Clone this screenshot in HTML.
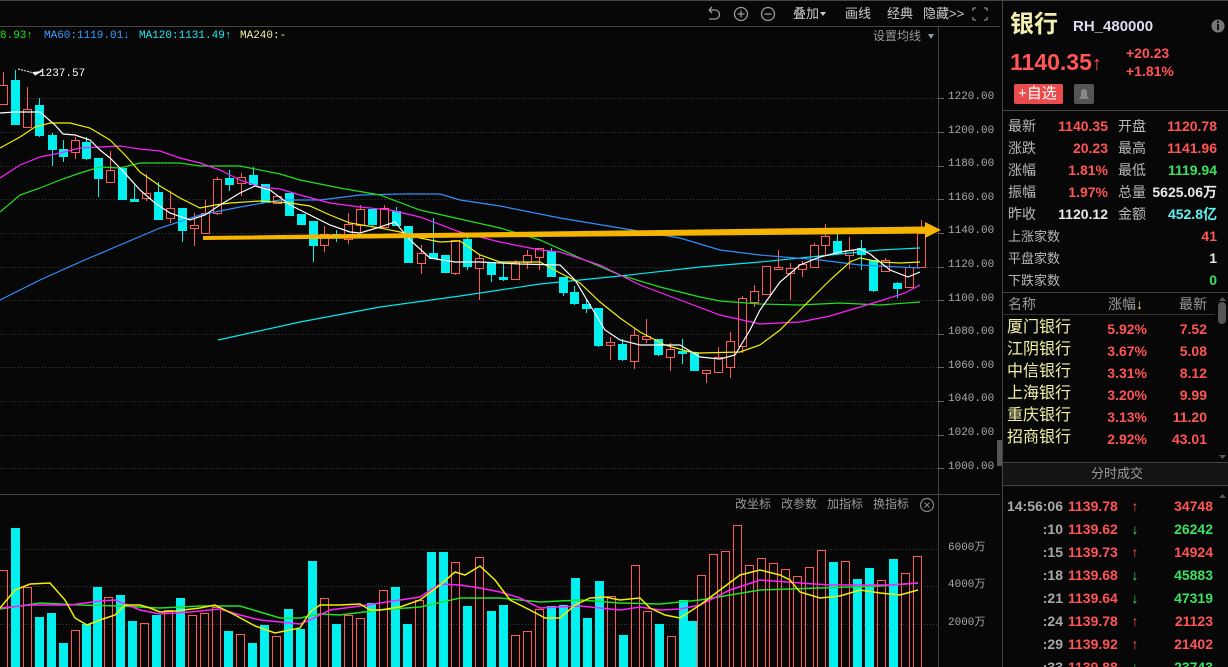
<!DOCTYPE html>
<html style="width:1228px;height:667px;overflow:hidden"><head><meta charset="utf-8">
<style>
*{margin:0;padding:0;box-sizing:border-box}
body{width:1228px;height:667px;background:#070707;overflow:hidden;position:relative;font-family:"Liberation Sans","Noto Sans CJK SC",sans-serif;color:#ccc}
.a{position:absolute;white-space:nowrap;line-height:1}
.m{font-family:"Liberation Mono","Noto Sans CJK SC",monospace}
.r{color:#ff5555}.g{color:#3ee060}.w{color:#e8e8e8}.gr{color:#a8a8a8}
.lbl{font-size:14px;color:#b8b8b8}
.val{font-size:14px;font-weight:bold;text-align:right}
.nm{font-size:16px;color:#f2f0a8}
</style></head><body>
<svg id="ch" width="1228" height="667" style="position:absolute;left:0;top:0">
<g stroke="#3a3a3a" stroke-width="1" stroke-dasharray="1,2" id="grid"></g>
<line x1="0" y1="0.5" x2="1228" y2="0.5" stroke="#444"/>
<line x1="0" y1="26.5" x2="1000" y2="26.5" stroke="#444"/>
<line x1="938.5" y1="27" x2="938.5" y2="667" stroke="#444"/>
<line x1="0" y1="494.5" x2="1000" y2="494.5" stroke="#444"/>
<line x1="1002.5" y1="0" x2="1002.5" y2="667" stroke="#444"/>
<rect x="997" y="440" width="5" height="26" fill="#555"/>
<g id="cd"></g><g id="ln" fill="none" stroke-width="1.2"></g>
<g id="vl"></g><g id="vln" fill="none" stroke-width="1.5"></g>
<g id="tk" stroke="#666"></g>
<polygon points="203,236 925,226.5 925,222 941,230 925,238 925,233.5 203,240" fill="#f5b400"/>
<polyline points="42,71 35,75 33,72" fill="#fff" stroke="#fff"/>
<polyline points="18,69 30,72 37,74" fill="none" stroke="#fff" stroke-dasharray="2,1"/>
<circle cx="741" cy="14" r="6.5" fill="none" stroke="#999" stroke-width="1.3"/><path d="M737.5 14h7M741 10.5v7" stroke="#999" stroke-width="1.3"/>
<circle cx="768" cy="14" r="6.5" fill="none" stroke="#999" stroke-width="1.3"/><path d="M764.5 14h7" stroke="#999" stroke-width="1.3"/>
<path d="M709 10h6a4.5 4.5 0 0 1 0 9h-6M709 10l3-3M709 10l3 3" fill="none" stroke="#999" stroke-width="1.3"/>
<path d="M820 12l6 0-3 4z" fill="#ccc"/>
<path d="M973 8h3M973 8v3M987 8h-3M987 8v3M973 20h3M973 20v-3M987 20h-3M987 20v-3" stroke="#888" stroke-width="1.3"/>
<path d="M928 34l6 0-3 5z" fill="#8899bb"/>
<circle cx="927" cy="505" r="6.5" fill="none" stroke="#888" stroke-width="1.2"/><path d="M924.5 502.5l5 5M929.5 502.5l-5 5" stroke="#888"/>
<circle cx="1218" cy="26" r="6.5" fill="#777"/><rect x="1217" y="24" width="2" height="6" fill="#111"/><rect x="1217" y="21" width="2" height="2" fill="#111"/>
<rect x="1014" y="84" width="49" height="20" rx="2" fill="#e84c4c"/>
<rect x="1074" y="84" width="20" height="20" rx="2" fill="#555"/><path d="M1079 99h10l-2-3v-4a3 3 0 0 0-6 0v4z" fill="#888"/>
<line x1="1003" y1="110.5" x2="1228" y2="110.5" stroke="#444"/>
<line x1="1003" y1="292.5" x2="1228" y2="292.5" stroke="#444"/>
<line x1="1003" y1="314.5" x2="1215" y2="314.5" stroke="#333"/>
<rect x="1003" y="462" width="225" height="24" fill="#141414"/>
<line x1="1003" y1="462.5" x2="1228" y2="462.5" stroke="#444"/>
<line x1="1003" y1="485.5" x2="1228" y2="485.5" stroke="#444"/>
<rect x="1218" y="302" width="8" height="22" rx="4" fill="#555"/>
<path d="M1219 301l3.5-4 3.5 4zM1219 455l3.5 4 3.5-4zM1219 498l3.5-4 3.5 4z" fill="#555"/>
</svg>
<script>
var S='http://www.w3.org/2000/svg';
function el(p,t,a){var e=document.createElementNS(S,t);for(var k in a)e.setAttribute(k,a[k]);document.getElementById(p).appendChild(e);return e}
var gy=[98,132,166,199,233,267,300,334,367,401,435,468];
gy.forEach(function(y){el('grid','line',{x1:0,y1:y+.5,x2:938,y2:y+.5})});
[549,586,624].forEach(function(y){el('grid','line',{x1:0,y1:y+.5,x2:938,y2:y+.5})});
gy.forEach(function(y){el('tk','line',{x1:938,y1:y+.5,x2:944,y2:y+.5})});
var C=[[3,85,104,72,104,1],[15,80,124,70,124,0],[27,109,127,87,127,1],[39,105,135,98,137,0],[52,135,149,133,166,0],[63,149,156,140,162,0],[75,140,152,137,159,1],[86,142,158,137,160,0],[98,158,178,158,197,0],[110,170,182,151,182,1],[122,168,199,168,200,0],[134,199,201,185,201,0],[146,193,198,174,201,1],[158,192,219,182,220,0],[170,208,218,191,223,1],[182,208,230,208,242,0],[194,225,228,213,246,1],[205,213,233,200,233,1],[217,179,213,177,215,1],[229,178,184,170,191,0],[241,177,183,173,196,1],[253,175,184,167,184,0],[265,184,202,184,203,0],[277,196,203,195,203,1],[289,193,215,193,215,0],[301,214,224,214,224,0],[313,221,245,221,262,0],[324,234,245,226,252,1],[336,234,237,230,242,0],[348,224,239,213,244,1],[360,209,225,205,233,1],[372,209,224,209,226,0],[384,208,227,205,227,1],[396,211,225,207,225,0],[408,226,262,226,262,0],[421,253,263,245,274,1],[433,253,258,218,258,0],[445,255,272,255,272,0],[455,240,273,240,275,1],[467,239,266,237,270,0],[479,258,268,254,300,1],[491,262,274,262,282,0],[503,277,279,263,281,0],[515,262,279,260,279,1],[527,255,262,250,269,1],[539,248,257,248,270,1],[551,251,276,248,276,0],[563,277,292,277,296,0],[574,292,303,286,305,0],[586,304,308,299,313,0],[598,308,345,308,347,0],[610,342,345,337,360,1],[622,344,359,339,361,0],[634,335,361,328,369,1],[646,336,339,319,343,1],[658,339,354,339,356,0],[670,349,357,343,371,1],[682,351,353,339,364,0],[694,353,370,353,371,0],[706,370,373,370,383,1],[718,357,372,347,372,1],[730,341,367,332,378,1],[742,298,346,296,353,1],[754,291,302,285,307,1],[766,266,294,266,294,1],[778,267,269,250,269,1],[790,268,273,263,300,1],[802,264,269,261,277,1],[814,245,267,243,267,1],[825,236,245,224,255,1],[837,241,253,234,253,0],[849,250,255,237,269,1],[861,248,254,240,270,0],[873,260,290,260,292,0],[885,260,271,258,271,1],[897,283,288,282,298,0],[909,267,287,265,287,1],[921,233,267,220,267,1]];
C.forEach(function(c){var x=c[0],col=c[5]?'#ff5a5a':'#00f0f0';
el('cd','line',{x1:x+.5,y1:c[3],x2:x+.5,y2:c[4],stroke:col});
var h=Math.max(c[2]-c[1],1);
if(c[5])el('cd','rect',{x:x-3.5,y:c[1]+.5,width:8,height:h,fill:'#070707',stroke:col});
else el('cd','rect',{x:x-4,y:c[1],width:9,height:h+1,fill:col});});
function pl(g,col,pts){el(g,'polyline',{points:pts,stroke:col})}
pl('ln','#00e8f0','218,340 300,322 380,307 460,296 540,284 620,276 700,267 760,262 830,255 880,250 920,248');
pl('ln','#2f8fff','0,300 40,280 80,262 120,245 160,228 200,215 240,207 280,200 320,200 360,195 400,194 440,194 460,200 500,206 560,218 620,228 680,238 720,250 760,255 820,260 860,265 920,268');
pl('ln','#20e020','0,212 20,195 40,188 60,180 80,173 100,167 120,168 140,163 180,163 200,166 240,166 280,174 300,180 340,188 380,195 420,210 460,219 500,228 540,240 580,258 620,275 660,287 700,297 720,301 760,304 800,305 840,303 880,305 920,302');
pl('ln','#ff20ff','0,178 20,165 40,157 60,153 80,148 100,147 120,146 140,149 160,151 180,158 200,163 220,170 240,180 260,187 280,189 300,195 330,203 360,207 390,210 420,217 460,232 500,242 540,250 560,252 600,265 640,285 680,300 720,315 760,324 800,322 830,316 850,310 880,301 905,293 920,285');
pl('ln','#f0f000','0,148 20,137 35,127 50,123 70,123 90,128 110,140 125,155 140,172 160,186 180,198 200,208 215,205 230,203 260,201 290,203 310,206 330,215 350,223 380,228 400,232 420,238 440,242 460,241 480,255 500,262 540,262 560,273 580,283 600,302 620,318 640,332 665,345 690,352 700,353 740,352 760,345 780,330 800,310 830,280 850,262 860,258 880,262 900,263 920,262');
pl('ln','#ffffff','0,113 15,112 40,112 55,125 63,134 75,135 90,140 100,150 110,158 122,170 140,190 155,203 170,213 190,220 205,215 220,205 240,193 255,186 270,190 290,205 310,215 330,225 350,232 360,233 380,227 395,222 410,240 430,258 455,262 480,262 520,264 560,265 575,280 590,305 605,330 620,340 640,345 680,345 700,357 720,359 735,355 750,330 760,310 780,282 800,265 820,257 840,252 860,249 870,254 890,270 908,277 920,272');
var V=[[3,570,1],[15,528,0],[27,587,1],[39,617,0],[51,613,0],[63,643,0],[75,630,1],[86,624,0],[97,587,0],[108,597,1],[120,595,0],[132,621,0],[144,623,1],[156,615,0],[168,610,1],[180,598,0],[192,615,1],[204,613,1],[216,607,1],[228,631,0],[240,634,1],[252,643,0],[264,625,0],[276,636,1],[288,609,0],[300,629,0],[312,561,0],[324,598,1],[336,624,0],[348,615,1],[360,618,1],[371,603,0],[383,590,1],[395,587,0],[407,624,0],[419,600,1],[431,552,0],[443,552,0],[455,562,1],[467,606,0],[479,557,1],[491,611,0],[503,605,0],[515,635,1],[527,631,1],[539,609,1],[551,606,0],[563,605,0],[575,578,0],[587,618,0],[599,581,0],[611,596,1],[623,635,0],[635,565,1],[647,611,1],[659,624,0],[671,636,1],[683,600,0],[692,621,0],[701,575,1],[713,554,1],[725,551,1],[737,525,1],[749,565,1],[761,558,1],[773,563,1],[785,569,1],[797,576,1],[809,567,1],[821,550,1],[833,562,0],[845,561,1],[857,579,0],[869,568,0],[881,580,1],[893,559,0],[905,573,1],[917,556,1]];
V.forEach(function(v){var x=v[0];if(v[2])el('vl','rect',{x:x-3.5,y:v[1]+.5,width:8,height:667-v[1],fill:'none',stroke:'#ff5a5a'});else el('vl','rect',{x:x-4,y:v[1],width:9,height:667-v[1],fill:'#00f0f0'})});
pl('vln','#20e020','0,609 40,603 80,605 120,606 160,608 200,606 240,606 260,612 280,618 300,618 320,614 340,615 380,610 420,607 460,598 500,598 540,602 580,600 620,603 660,604 700,600 760,590 820,588 880,586 918,583');
pl('vln','#ff20ff','0,608 30,605 70,605 100,601 115,600 140,610 160,614 190,612 220,609 240,615 260,620 280,622 300,624 310,620 330,610 360,606 400,600 420,597 440,584 460,585 480,588 500,592 520,598 540,608 580,606 600,608 620,610 640,607 660,610 680,609 700,605 730,590 760,580 800,583 830,585 860,585 890,585 918,583');
pl('vln','#f0f000','0,608 15,590 30,584 50,583 65,600 75,618 87,625 100,620 115,615 125,605 140,605 150,608 160,612 175,611 200,608 215,605 235,615 255,626 275,633 290,630 300,628 310,612 320,605 340,605 360,604 370,610 380,610 400,607 420,600 440,585 455,572 465,575 480,566 495,580 510,600 530,610 545,618 560,618 575,605 590,598 605,597 620,600 640,598 650,608 665,615 680,618 700,605 720,590 740,575 760,570 780,575 790,580 800,592 820,598 840,596 860,590 880,593 900,595 918,590');
</script>
<div class="a" style="left:793px;top:7px;font-size:13px;color:#ccc">叠加</div>
<div class="a" style="left:845px;top:7px;font-size:13px;color:#ccc">画线</div>
<div class="a" style="left:887px;top:7px;font-size:13px;color:#ccc">经典</div>
<div class="a" style="left:923px;top:7px;font-size:13px;color:#ccc">隐藏&gt;&gt;</div>
<div class="a m" style="left:0;top:31px;font-size:11px;color:#20e020">8.93↑</div>
<div class="a m" style="left:44px;top:31px;font-size:11px;color:#3c9cff">MA60:1119.01↓</div>
<div class="a m" style="left:139px;top:31px;font-size:11px;color:#20e8f0">MA120:1131.49↑</div>
<div class="a m" style="left:240px;top:31px;font-size:11px;color:#f0f0a0">MA240:-</div>
<div class="a" style="left:873px;top:30px;font-size:12px;color:#999">设置均线</div>
<div class="a m" style="left:39px;top:69px;font-size:11px;color:#fff">1237.57</div>
<div class="a" style="left:735px;top:498px;font-size:12px;color:#999">改坐标&nbsp;&nbsp;&nbsp;改参数&nbsp;&nbsp;&nbsp;加指标&nbsp;&nbsp;&nbsp;换指标</div>
<div class="a m" style="left:948px;top:81px;font-size:11px;color:#aaa;line-height:33.6px">1220.00<br>1200.00<br>1180.00<br>1160.00<br>1140.00<br>1120.00<br>1100.00<br>1080.00<br>1060.00<br>1040.00<br>1020.00<br>1000.00</div>
<div class="a m" style="left:948px;top:543px;font-size:11px;color:#aaa">6000万</div>
<div class="a m" style="left:948px;top:580px;font-size:11px;color:#aaa">4000万</div>
<div class="a m" style="left:948px;top:618px;font-size:11px;color:#aaa">2000万</div>
<div class="a" style="left:1010px;top:13px;font-size:24px;color:#f2f0b0;font-weight:bold">银行</div>
<div class="a" style="left:1073px;top:19px;font-size:15px;color:#dde;font-weight:bold">RH_480000</div>
<div class="a r" style="left:1010px;top:51px;font-size:23px;font-weight:bold">1140.35<span style="font-size:20px">↑</span></div>
<div class="a r" style="left:1126px;top:46px;font-size:14px;font-weight:bold">+20.23</div>
<div class="a r" style="left:1126px;top:64px;font-size:14px;font-weight:bold">+1.81%</div>
<div class="a" style="left:1018px;top:86px;font-size:15px;color:#fff">+自选</div>
<div class="a lbl" style="left:1008px;top:115px;line-height:22px">最新<br>涨跌<br>涨幅<br>振幅<br>昨收</div>
<div class="a lbl" style="left:1118px;top:115px;line-height:22px">开盘<br>最高<br>最低<br>总量<br>金额</div>
<div class="a val" style="left:1040px;width:68px;top:115px;line-height:22px"><span class="r">1140.35</span><br><span class="r">20.23</span><br><span class="r">1.81%</span><br><span class="r">1.97%</span><br><span class="w">1120.12</span></div>
<div class="a val" style="left:1140px;width:77px;top:115px;line-height:22px"><span class="r">1120.78</span><br><span class="r">1141.96</span><br><span class="g">1119.94</span><br><span class="w">5625.06万</span><br><span style="color:#60f0f0">452.8亿</span></div>
<div class="a" style="left:1008px;top:226px;font-size:13px;color:#b8b8b8;line-height:22px">上涨家数<br>平盘家数<br>下跌家数</div>
<div class="a val" style="left:1170px;width:47px;top:225px;line-height:22px"><span class="r">41</span><br><span class="w">1</span><br><span class="g">0</span></div>
<div class="a" style="left:1008px;top:297px;font-size:14px;color:#999">名称</div>
<div class="a" style="left:1108px;top:297px;font-size:14px;color:#999">涨幅<span style="color:#f0e060">↓</span></div>
<div class="a" style="left:1179px;top:297px;font-size:14px;color:#999">最新</div>
<div class="a nm" style="left:1007px;top:317px;line-height:22px">厦门银行<br>江阴银行<br>中信银行<br>上海银行<br>重庆银行<br>招商银行</div>
<div class="a val r" style="left:1090px;width:57px;top:318px;line-height:22px">5.92%<br>3.67%<br>3.31%<br>3.20%<br>3.13%<br>2.92%</div>
<div class="a val r" style="left:1160px;width:47px;top:318px;line-height:22px">7.52<br>5.08<br>8.12<br>9.99<br>11.20<br>43.01</div>
<div class="a" style="left:1091px;top:467px;font-size:13px;color:#999">分时成交</div>
<div style="position:absolute;left:1003px;top:495px;width:225px;height:172px;overflow:hidden">
<div class="a val gr" style="left:0;width:60px;top:0;line-height:23px">14:56:06<br>:10<br>:15<br>:18<br>:21<br>:24<br>:29<br>:33</div>
<div class="a val r" style="left:65px;width:58px;top:0;line-height:23px;text-align:left">1139.78<br>1139.62<br>1139.73<br>1139.68<br>1139.64<br>1139.78<br>1139.92<br>1139.88</div>
<div class="a val" style="left:125px;width:14px;top:0;line-height:23px;text-align:center"><span class="r">↑</span><br><span class="g">↓</span><br><span class="r">↑</span><br><span class="g">↓</span><br><span class="g">↓</span><br><span class="r">↑</span><br><span class="r">↑</span><br><span class="g">↓</span></div>
<div class="a val" style="left:157px;width:53px;top:0;line-height:23px"><span class="r">34748</span><br><span class="g">26242</span><br><span class="r">14924</span><br><span class="g">45883</span><br><span class="g">47319</span><br><span class="r">21123</span><br><span class="r">21402</span><br><span class="g">23743</span></div>
</div>
</body></html>
